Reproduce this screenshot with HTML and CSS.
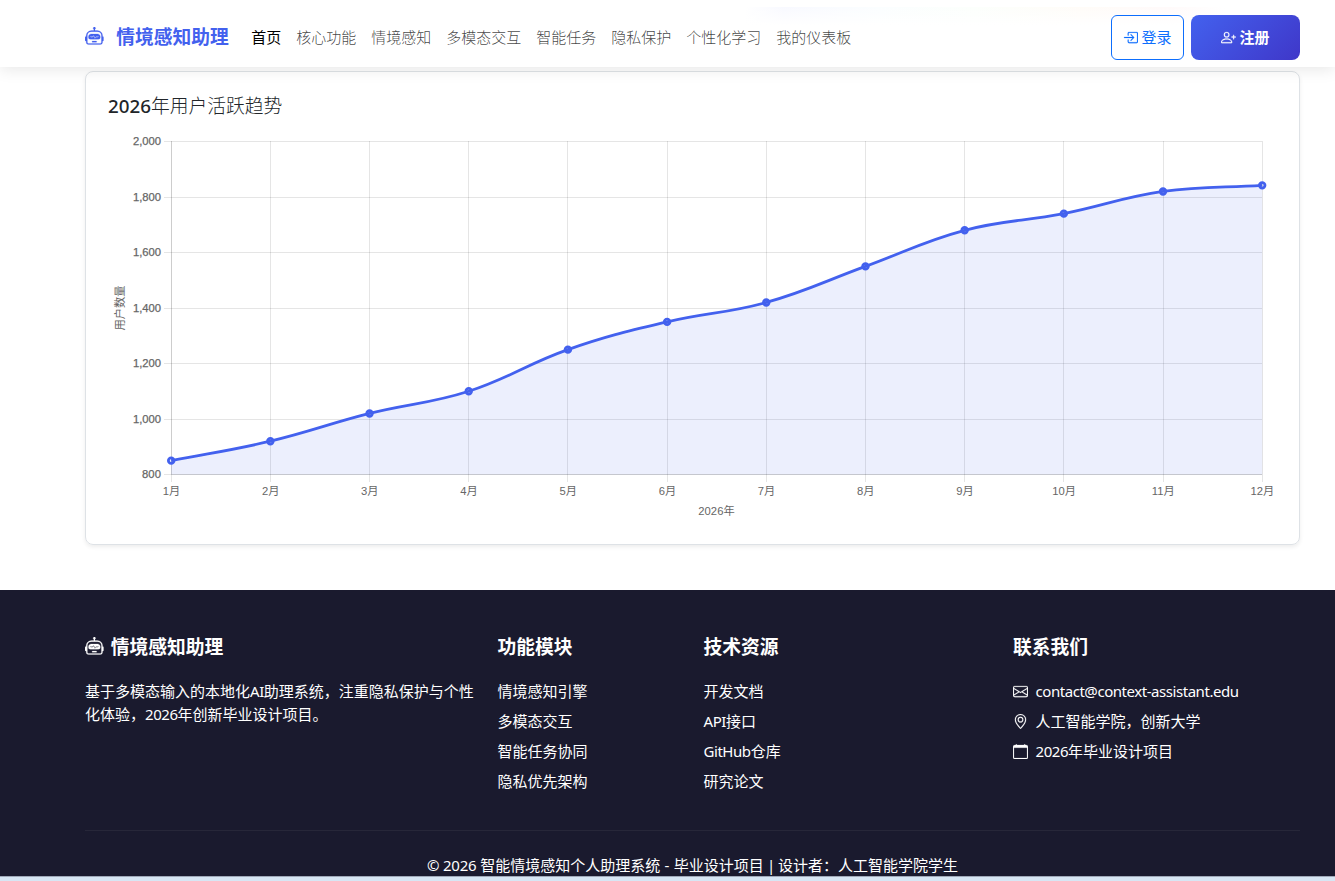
FILE: index.html
```
<!DOCTYPE html>
<html lang="zh-CN">
<head>
<meta charset="utf-8">
<title>情境感知助理</title>
<link rel="stylesheet" href="styles.css">
</head>
<body>
<svg class="sprite" aria-hidden="true">
  <symbol id="robot" viewBox="0 0 16 16"><path d="M6 12.5a.5.5 0 0 1 .5-.5h3a.5.5 0 0 1 0 1h-3a.5.5 0 0 1-.5-.5M3 8.062C3 6.76 4.235 5.765 5.53 5.886a26.6 26.6 0 0 0 4.94 0C11.765 5.765 13 6.76 13 8.062v1.157a.93.93 0 0 1-.765.935c-.845.147-2.34.346-4.235.346s-3.39-.2-4.235-.346A.93.93 0 0 1 3 9.219zm4.542-.827a.25.25 0 0 0-.217.068l-.92.9a25 25 0 0 1-1.871-.183.25.25 0 0 0-.068.495c.55.076 1.232.149 2.02.193a.25.25 0 0 0 .189-.071l.754-.736.847 1.71a.25.25 0 0 0 .404.062l.932-.97a25 25 0 0 0 1.922-.188.25.25 0 0 0-.068-.495c-.538.074-1.207.145-1.98.189a.25.25 0 0 0-.166.076l-.754.785-.842-1.7a.25.25 0 0 0-.182-.135"/><path d="M8.5 1.866a1 1 0 1 0-1 0V3h-2A4.5 4.5 0 0 0 1 7.5V8a1 1 0 0 0-1 1v2a1 1 0 0 0 1 1v1a2 2 0 0 0 2 2h10a2 2 0 0 0 2-2v-1a1 1 0 0 0 1-1V9a1 1 0 0 0-1-1v-.5A4.5 4.5 0 0 0 10.500 3h-2zM14 7.500V13a1 1 0 0 1-1 1H3a1 1 0 0 1-1-1V7.500A3.500 3.500 0 0 1 5.500 4h5A3.500 3.500 0 0 1 14 7.500"/></symbol>
  <symbol id="login" viewBox="0 0 16 16"><path fill-rule="evenodd" d="M6 3.500a.5.5 0 0 1 .5-.5h8a.5.5 0 0 1 .5.5v9a.5.5 0 0 1-.5.5h-8a.5.5 0 0 1-.5-.5v-2a.5.5 0 0 0-1 0v2A1.500 1.500 0 0 0 6.500 14h8a1.500 1.500 0 0 0 1.500-1.500v-9A1.500 1.500 0 0 0 14.500 2h-8A1.500 1.500 0 0 0 5 3.500v2a.5.5 0 0 0 1 0z"/><path fill-rule="evenodd" d="M11.854 8.354a.5.5 0 0 0 0-.708l-3-3a.5.5 0 1 0-.708.708L10.293 7.500H1.500a.5.5 0 0 0 0 1h8.793l-2.147 2.146a.5.5 0 0 0 .708.708z"/></symbol>
  <symbol id="person-plus" viewBox="0 0 16 16"><path d="M6 8a3 3 0 1 0 0-6 3 3 0 0 0 0 6m2-3a2 2 0 1 1-4 0 2 2 0 0 1 4 0m4 8c0 1-1 1-1 1H1s-1 0-1-1 1-4 6-4 6 3 6 4m-1-.004c-.001-.246-.154-.986-.832-1.664C9.516 10.680 8.289 10 6 10s-3.516.68-4.168 1.332c-.678.678-.83 1.418-.832 1.664z"/><path fill-rule="evenodd" d="M13.500 5a.5.5 0 0 1 .5.5V7h1.500a.5.5 0 0 1 0 1H14v1.500a.5.5 0 0 1-1 0V8h-1.500a.5.5 0 0 1 0-1H13V5.500a.5.5 0 0 1 .5-.5"/></symbol>
  <symbol id="envelope" viewBox="0 0 16 16"><path d="M0 4a2 2 0 0 1 2-2h12a2 2 0 0 1 2 2v8a2 2 0 0 1-2 2H2a2 2 0 0 1-2-2zm2-1a1 1 0 0 0-1 1v.217l7 4.200 7-4.200V4a1 1 0 0 0-1-1zm13 2.383-4.708 2.825L15 11.105zm-.034 6.876-5.640-3.471L8 9.583l-1.326-.795-5.640 3.470A1 1 0 0 0 2 13h12a1 1 0 0 0 .966-.741M1 11.105l4.708-2.897L1 5.383z"/></symbol>
  <symbol id="geo" viewBox="0 0 16 16"><path d="M12.166 8.940c-.524 1.062-1.234 2.120-1.960 3.070A32 32 0 0 1 8 14.580a32 32 0 0 1-2.206-2.570c-.726-.95-1.436-2.008-1.960-3.070C3.304 7.867 3 6.862 3 6a5 5 0 0 1 10 0c0 .862-.305 1.867-.834 2.940M8 16s6-5.686 6-10A6 6 0 0 0 2 6c0 4.314 6 10 6 10"/><path d="M8 8a2 2 0 1 1 0-4 2 2 0 0 1 0 4m0 1a3 3 0 1 0 0-6 3 3 0 0 0 0 6"/></symbol>
  <symbol id="calendar" viewBox="0 0 16 16"><path d="M3.500 0a.5.5 0 0 1 .5.5V1h8V.5a.5.5 0 0 1 1 0V1h1a2 2 0 0 1 2 2v11a2 2 0 0 1-2 2H2a2 2 0 0 1-2-2V3a2 2 0 0 1 2-2h1V.5a.5.5 0 0 1 .5-.5M1 4v10a1 1 0 0 0 1 1h12a1 1 0 0 0 1-1V4z"/></symbol>
</svg>

<header class="navbar">
  <a class="brand"><svg class="icon"><use href="#robot"/></svg><span>情境感知助理</span></a>
  <nav class="nav-links">
    <a class="active">首页</a><a>核心功能</a><a>情境感知</a><a>多模态交互</a><a>智能任务</a><a>隐私保护</a><a>个性化学习</a><a>我的仪表板</a>
  </nav>
  <div class="actions">
    <a class="btn btn-outline"><svg class="icon"><use href="#login"/></svg>登录</a>
    <a class="btn btn-primary"><svg class="icon"><use href="#person-plus"/></svg>注册</a>
  </div>
</header>

<main class="content">
  <section class="card">
    <h5 class="card-title"><span class="year">2026</span>年用户活跃趋势</h5>
    <svg class="chart" id="chart" width="1170" height="400" viewBox="108 130 1170 400"></svg>
  </section>
</main>

<footer class="footer">
  <div class="footer-grid">
    <div>
      <h5><svg class="icon"><use href="#robot"/></svg><span>情境感知助理</span></h5>
      <p class="about">基于多模态输入的本地化<span class="latin">AI</span>助理系统，注重隐私保护与个性<br>化体验，<span class="latin">2026</span>年创新毕业设计项目。</p>
    </div>
    <div>
      <h5>功能模块</h5>
      <ul><li>情境感知引擎</li><li>多模态交互</li><li>智能任务协同</li><li>隐私优先架构</li></ul>
    </div>
    <div>
      <h5>技术资源</h5>
      <ul><li>开发文档</li><li><span class="latin">API</span>接口</li><li><span class="latin">GitHub</span>仓库</li><li>研究论文</li></ul>
    </div>
    <div>
      <h5>联系我们</h5>
      <ul class="contact">
        <li><svg class="icon"><use href="#envelope"/></svg><span class="latin">contact@context-assistant.edu</span></li>
        <li><svg class="icon"><use href="#geo"/></svg><span>人工智能学院，创新大学</span></li>
        <li><svg class="icon"><use href="#calendar"/></svg><span><span class="latin">2026</span>年毕业设计项目</span></li>
      </ul>
    </div>
  </div>
  <p class="copyright"><span class="mark">© 2026 </span>智能情境感知个人助理系统<span class="mark dash"> - </span>毕业设计项目<span class="mark bar"> | </span>设计者：人工智能学院学生</p>
</footer>
<div class="bottom-edge"></div>
<script src="chart.js"></script>
</body>
</html>
```
FILE: styles.css
```
* { box-sizing: border-box; }
html, body { height: 100%; }
body {
  margin: 0;
  height: 881px;
  overflow: hidden;
  display: flex;
  flex-direction: column;
  background: #fff;
  color: #212529;
  font: 15px/22.5px "Noto Sans", "Noto Sans CJK SC", sans-serif;
}
.sprite { display: none; }
.icon { width: 1em; height: 1em; fill: currentColor; stroke: currentColor; stroke-width: .2px; flex: none; }
h5, p, ul { margin: 0; padding: 0; }
ul { list-style: none; }

.navbar {
  position: relative;
  z-index: 2;
  flex: none;
  height: 67px;
  padding: 7px 35px 0 85px;
  display: flex;
  align-items: center;
  background:
    linear-gradient(to bottom, rgba(255, 255, 255, 0), #fff) 745px 7px / 480px 18px no-repeat,
    linear-gradient(to right, #fff, #f8f9ff 8%, #fbfeff 28%, #fcfffc 48%, #fffcf8 70%, #fffafa 88%, #fff) 745px 7px / 480px 18px no-repeat,
    #fff;
  box-shadow: 0 2px 15px rgba(0, 0, 0, .1);
}
.brand { display: flex; align-items: center; gap: 12.5px; color: #4361ee; font-size: 18.75px; font-weight: 700; }
.brand span { padding-top: 1px; }
.brand .icon { margin-top: -1px; }
.nav-links { display: flex; gap: 15px; margin-left: 22.5px; color: rgba(0, 0, 0, .75); }
.nav-links a { white-space: nowrap; font-weight: 300; }
.nav-links .active { color: #000; font-weight: 400; }
.actions { display: flex; gap: 7px; margin-left: auto; }
.btn { height: 45px; display: flex; align-items: center; justify-content: center; gap: 3px; }
.btn-outline { width: 73px; border: 1px solid #0d6efd; border-radius: 6px; color: #0d6efd; }
.btn-primary { width: 109px; border-radius: 8px; color: #fff; font-weight: 700; background: linear-gradient(135deg, #4361ee, #3f37c9); }

.content { flex: none; height: 523px; padding: 4px 35px 0 85px; }
.card {
  height: 474px;
  padding: 22px 22px 0;
  border: 1px solid #dee2e6;
  border-radius: 8px;
  box-shadow: 0 2px 4px rgba(0, 0, 0, .075);
}
.card-title { height: 36px; font-size: 18.75px; line-height: 24px; font-weight: 300; }
.year { font-weight: 500; }
.chart {
  display: block;
  font: 11.25px "Liberation Sans", "Noto Sans CJK SC", sans-serif;
  fill: #666;
}
.chart .tick { stroke: #666; stroke-width: .25px; }

.footer { flex: none; height: 286px; padding: 45px 35px 0 85px; background: #1a1a2e; color: #fff; }
.footer-grid { height: 195px; display: grid; grid-template-columns: 412.5px 206px 309.5px 1fr; }
.footer h5 { display: flex; align-items: center; gap: 7px; height: 24px; margin-bottom: 21px; font-size: 18.75px; font-weight: 700; }
.footer h5 .icon { margin-top: -2px; }
.footer li { height: 22.5px; margin-bottom: 7.5px; display: flex; align-items: center; }
.contact li { gap: 7.5px; }
.about { white-space: nowrap; line-height: 23px; }
.latin { white-space: pre; letter-spacing: -.45px; }
.mark { white-space: pre; letter-spacing: -.2px; }
.dash { letter-spacing: .3px; }
.bar { letter-spacing: -.6px; }
.copyright { padding-top: 23px; border-top: 1px solid #272739; text-align: center; }
.bottom-edge { height: 5px; background: #d7e6f4; border-top: 1px solid #9fa8b8; }
```
FILE: chart.js
```
const months = 12, left = 171.2, step = 99.18, top_ = 141.5, bottom = 474.5;
const values = [850, 920, 1020, 1100, 1250, 1350, 1420, 1550, 1680, 1740, 1820, 1842];
const y = v => bottom - (v - 800) * (bottom - top_) / 1200;
const pts = values.map((v, i) => [left + i * step, y(v)]);
let out = '';

for (let v = 800; v <= 2000; v += 200) {
  const gy = Math.floor(y(v)) + .5;
  out += `<line x1="164" x2="1262" y1="${gy}" y2="${gy}" stroke="#000" stroke-opacity=".1"/>`;
  out += `<text class="tick" x="161" y="${gy + 3.5}" text-anchor="end" textLength="${v < 1000 ? 19 : 28}">${v.toLocaleString('en-US')}</text>`;
}
pts.forEach(([x], i) => {
  const gx = Math.floor(x) + .5;
  out += `<line x1="${gx}" x2="${gx}" y1="141" y2="482" stroke="#000" stroke-opacity=".1"/>`;
  out += `<text x="${x + .3}" y="495" text-anchor="middle">${i + 1}月</text>`;
});
out += `<path d="M171.5 141V474.5H1262" fill="none" stroke="#000" stroke-opacity=".1"/>`;

// Cardinal spline, tension 0.4
const handles = pts.map((p, i) => {
  const a = pts[i - 1] || p, b = pts[i + 1] || p;
  const d1 = Math.hypot(p[0] - a[0], p[1] - a[1]), d2 = Math.hypot(b[0] - p[0], b[1] - p[1]);
  const f1 = .4 * d1 / (d1 + d2), f2 = .4 * d2 / (d1 + d2);
  return [p[0] - f1 * (b[0] - a[0]), p[1] - f1 * (b[1] - a[1]), p[0] + f2 * (b[0] - a[0]), p[1] + f2 * (b[1] - a[1])];
});
let d = `M${pts[0]}`;
for (let i = 1; i < months; i++) {
  d += `C${handles[i - 1].slice(2)} ${handles[i].slice(0, 2)} ${pts[i]}`;
}
out += `<path d="${d}V474.5H171.2Z" fill="#4361ee" fill-opacity=".1"/>`;
out += `<path d="${d}" fill="none" stroke="#4361ee" stroke-width="2.8"/>`;
pts.forEach(([x, py]) => {
  out += `<circle cx="${x}" cy="${py}" r="2.8" fill="#4361ee" fill-opacity=".1" stroke="#4361ee" stroke-width="2.8"/>`;
});
out += `<text x="716.5" y="515" text-anchor="middle">2026年</text>`;
out += `<text transform="translate(123.500 308) rotate(-90)" text-anchor="middle">用户数量</text>`;
document.getElementById('chart').innerHTML = out;
```
